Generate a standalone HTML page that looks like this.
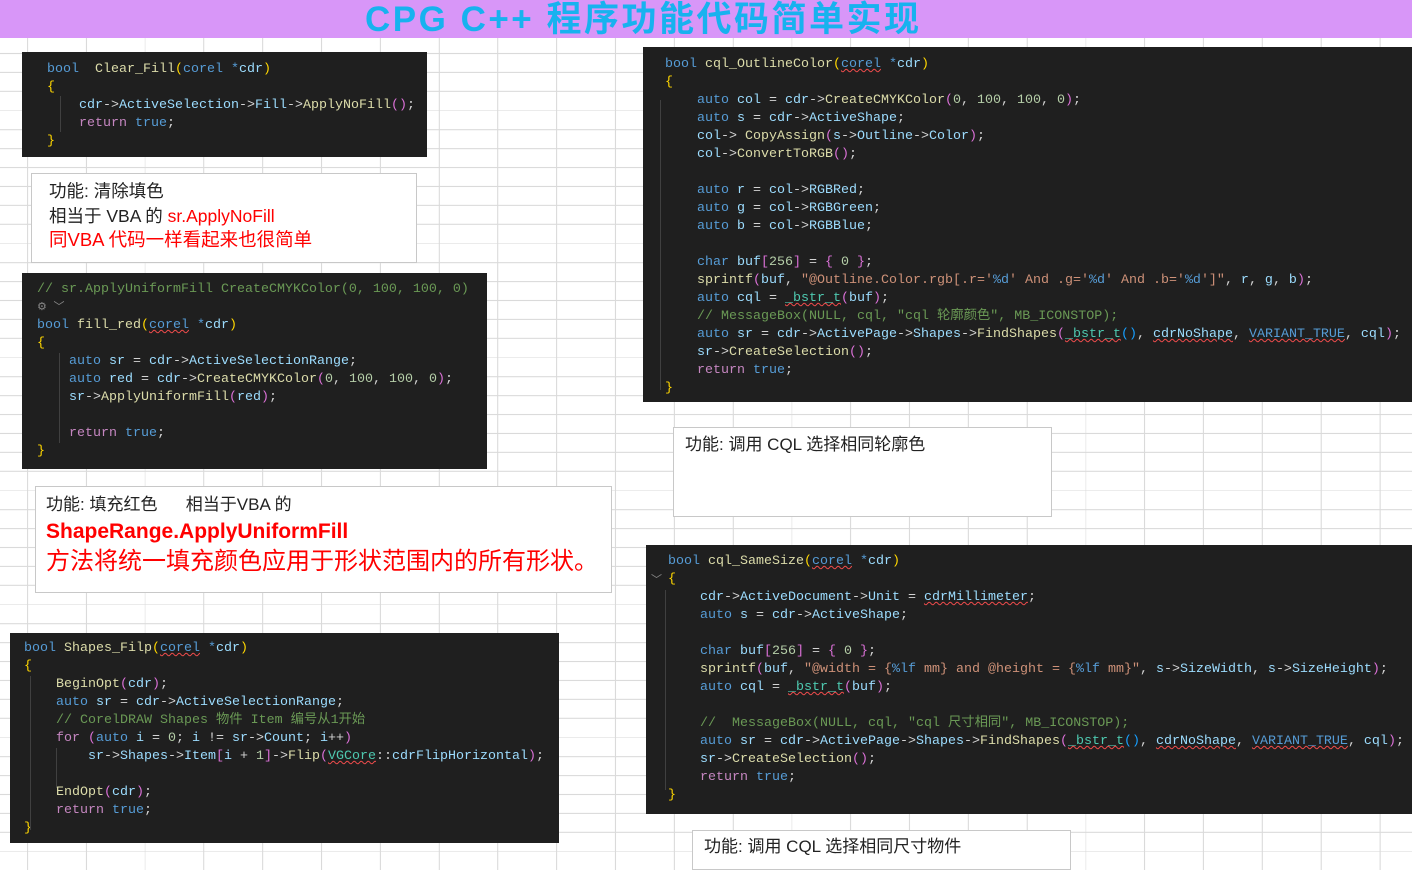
<!DOCTYPE html>
<html><head><meta charset="utf-8"><style>
html,body{margin:0;padding:0}
body{width:1412px;height:868px;position:relative;overflow:hidden;background:#fff;
background-image:repeating-linear-gradient(to right,transparent 0,transparent 27px,#dadada 27px,#dadada 28px,transparent 28px,transparent 58.8px),
repeating-linear-gradient(to bottom,transparent 0,transparent 15px,#dadada 15px,#dadada 16px,transparent 16px,transparent 19px);
background-position:0 0,0 0;}
.banner{position:absolute;left:0;top:0;width:1412px;height:38px;background:#d896f8;}
.title{position:absolute;left:365px;top:1px;width:570px;white-space:nowrap;font-family:"Liberation Sans","Noto Sans CJK SC",sans-serif;font-weight:bold;font-size:35px;letter-spacing:2.5px;color:#17b2ef;line-height:38px}
.code{position:absolute;background:#1f1f1f;box-sizing:border-box;overflow:hidden}
.code pre{margin:0;font-family:"Liberation Mono","Noto Sans CJK SC",monospace;font-size:13.33px;line-height:18px;color:#9cdcfe;white-space:pre}
.k{color:#569cd6}.f{color:#dcdcaa}.c{color:#c586c0}.n{color:#b5cea8}.s{color:#ce9178}.m{color:#6a9955}.y{color:#ffd700}.p{color:#da70d6}.bl{color:#179fff}.t{color:#4ec9b0}.w{color:#d4d4d4}
.u{text-decoration:underline wavy #f14c4c;text-decoration-thickness:1px}
.box{position:absolute;background:#fff;border:1px solid #c8c8c8;box-sizing:border-box;font-family:"Liberation Sans","Noto Sans CJK SC",sans-serif;color:#222}
.guide{position:absolute;width:1px;background:#404040}
</style></head><body>
<div class="banner"></div>
<div class="title">CPG C++ 程序功能代码简单实现</div>

<div class="code" style="left:22px;top:52px;width:405px;height:105px;padding:9px 0 0 25px">
<div class="guide" style="left:38px;top:44px;height:36px"></div>
<pre><span class="k">bool</span>  <span class="f">Clear_Fill</span><span class="y">(</span><span class="k">corel</span> <span class="k">*</span>cdr<span class="y">)</span>
<span class="y">{</span>
    cdr<span class="w">-&gt;</span>ActiveSelection<span class="w">-&gt;</span>Fill<span class="w">-&gt;</span><span class="f">ApplyNoFill</span><span class="p">()</span><span class="w">;</span>
    <span class="c">return</span> <span class="k">true</span><span class="w">;</span>
<span class="y">}</span></pre></div>

<div class="box" style="left:31px;top:173px;width:386px;height:90px;padding:5px 0 0 17px;font-size:17.5px;line-height:24.5px">
<div>功能: 清除填色</div>
<div>相当于 VBA 的 <span style="color:#f00">sr.ApplyNoFill</span></div>
<div style="color:#f00;font-size:18.5px">同VBA 代码一样看起来也很简单</div>
</div>

<div class="code" style="left:22px;top:273px;width:465px;height:196px;padding:8px 0 0 15px">
<div class="guide" style="left:37px;top:80px;height:90px"></div>
<pre><span class="m">// sr.ApplyUniformFill CreateCMYKColor(0, 100, 100, 0)</span>
<span style="color:#888;font-size:11px">⚙ ﹀</span>
<span class="k">bool</span> <span class="f">fill_red</span><span class="y">(</span><span class="k u">corel</span> <span class="k">*</span>cdr<span class="y">)</span>
<span class="y">{</span>
    <span class="k">auto</span> sr <span class="w">=</span> cdr<span class="w">-&gt;</span>ActiveSelectionRange<span class="w">;</span>
    <span class="k">auto</span> red <span class="w">=</span> cdr<span class="w">-&gt;</span><span class="f">CreateCMYKColor</span><span class="p">(</span><span class="n">0</span><span class="w">,</span> <span class="n">100</span><span class="w">,</span> <span class="n">100</span><span class="w">,</span> <span class="n">0</span><span class="p">)</span><span class="w">;</span>
    sr<span class="w">-&gt;</span><span class="f">ApplyUniformFill</span><span class="p">(</span>red<span class="p">)</span><span class="w">;</span>

    <span class="c">return</span> <span class="k">true</span><span class="w">;</span>
<span class="y">}</span></pre></div>

<div class="box" style="left:35px;top:486px;width:577px;height:107px;padding:6px 0 0 10px">
<div style="font-size:17px;line-height:24px">功能: 填充红色&nbsp;&nbsp;&nbsp;&nbsp;&nbsp;&nbsp;相当于VBA 的</div>
<div style="font-size:21px;line-height:29px;color:#f00;font-weight:bold">ShapeRange.ApplyUniformFill</div>
<div style="font-size:24px;line-height:32px;color:#f00">方法将统一填充颜色应用于形状范围内的所有形状。</div>
</div>

<div class="code" style="left:10px;top:633px;width:549px;height:210px;padding:7px 0 0 14px">
<div class="guide" style="left:20px;top:43px;height:154px"></div>
<div class="guide" style="left:46px;top:115px;height:40px"></div>
<pre><span class="k">bool</span> <span class="f">Shapes_Filp</span><span class="y">(</span><span class="k u">corel</span> <span class="k">*</span>cdr<span class="y">)</span>
<span class="y">{</span>
    <span class="f">BeginOpt</span><span class="p">(</span>cdr<span class="p">)</span><span class="w">;</span>
    <span class="k">auto</span> sr <span class="w">=</span> cdr<span class="w">-&gt;</span>ActiveSelectionRange<span class="w">;</span>
    <span class="m">// CorelDRAW Shapes 物件 Item 编号从1开始</span>
    <span class="c">for</span> <span class="p">(</span><span class="k">auto</span> i <span class="w">=</span> <span class="n">0</span><span class="w">;</span> i <span class="w">!=</span> sr<span class="w">-&gt;</span>Count<span class="w">;</span> i<span class="w">++</span><span class="p">)</span>
        sr<span class="w">-&gt;</span>Shapes<span class="w">-&gt;</span>Item<span class="p">[</span>i <span class="w">+</span> <span class="n">1</span><span class="p">]</span><span class="w">-&gt;</span><span class="f">Flip</span><span class="p">(</span><span class="t u">VGCore</span><span class="w">::</span>cdrFlipHorizontal<span class="p">)</span><span class="w">;</span>

    <span class="f">EndOpt</span><span class="p">(</span>cdr<span class="p">)</span><span class="w">;</span>
    <span class="c">return</span> <span class="k">true</span><span class="w">;</span>
<span class="y">}</span></pre></div>

<div class="code" style="left:643px;top:47px;width:769px;height:355px;padding:9px 0 0 22px">
<div class="guide" style="left:17px;top:53px;height:290px"></div>
<pre><span class="k">bool</span> <span class="f">cql_OutlineColor</span><span class="y">(</span><span class="k u">corel</span> <span class="k">*</span>cdr<span class="y">)</span>
<span class="y">{</span>
    <span class="k">auto</span> col <span class="w">=</span> cdr<span class="w">-&gt;</span><span class="f">CreateCMYKColor</span><span class="p">(</span><span class="n">0</span><span class="w">,</span> <span class="n">100</span><span class="w">,</span> <span class="n">100</span><span class="w">,</span> <span class="n">0</span><span class="p">)</span><span class="w">;</span>
    <span class="k">auto</span> s <span class="w">=</span> cdr<span class="w">-&gt;</span>ActiveShape<span class="w">;</span>
    col<span class="w">-&gt;</span> <span class="f">CopyAssign</span><span class="p">(</span>s<span class="w">-&gt;</span>Outline<span class="w">-&gt;</span>Color<span class="p">)</span><span class="w">;</span>
    col<span class="w">-&gt;</span><span class="f">ConvertToRGB</span><span class="p">()</span><span class="w">;</span>

    <span class="k">auto</span> r <span class="w">=</span> col<span class="w">-&gt;</span>RGBRed<span class="w">;</span>
    <span class="k">auto</span> g <span class="w">=</span> col<span class="w">-&gt;</span>RGBGreen<span class="w">;</span>
    <span class="k">auto</span> b <span class="w">=</span> col<span class="w">-&gt;</span>RGBBlue<span class="w">;</span>

    <span class="k">char</span> buf<span class="p">[</span><span class="n">256</span><span class="p">]</span> <span class="w">=</span> <span class="p">{</span> <span class="n">0</span> <span class="p">}</span><span class="w">;</span>
    <span class="f">sprintf</span><span class="p">(</span>buf<span class="w">,</span> <span class="s">"@Outline.Color.rgb[.r='<span class="k">%d</span>' And .g='<span class="k">%d</span>' And .b='<span class="k">%d</span>']"</span><span class="w">,</span> r<span class="w">,</span> g<span class="w">,</span> b<span class="p">)</span><span class="w">;</span>
    <span class="k">auto</span> cql <span class="w">=</span> <span class="t u">_bstr_t</span><span class="p">(</span>buf<span class="p">)</span><span class="w">;</span>
    <span class="m">// MessageBox(NULL, cql, "cql 轮廓颜色", MB_ICONSTOP);</span>
    <span class="k">auto</span> sr <span class="w">=</span> cdr<span class="w">-&gt;</span>ActivePage<span class="w">-&gt;</span>Shapes<span class="w">-&gt;</span><span class="f">FindShapes</span><span class="p">(</span><span class="t u">_bstr_t</span><span class="bl">()</span><span class="w">,</span> <span class="u">cdrNoShape</span><span class="w">,</span> <span class="k u">VARIANT_TRUE</span><span class="w">,</span> cql<span class="p">)</span><span class="w">;</span>
    sr<span class="w">-&gt;</span><span class="f">CreateSelection</span><span class="p">()</span><span class="w">;</span>
    <span class="c">return</span> <span class="k">true</span><span class="w">;</span>
<span class="y">}</span></pre></div>

<div class="box" style="left:673px;top:427px;width:379px;height:90px;padding:6px 0 0 11px;font-size:17px;line-height:22px">功能: 调用 CQL 选择相同轮廓色</div>

<div class="code" style="left:646px;top:545px;width:766px;height:269px;padding:8px 0 0 22px">
<div style="position:absolute;left:5px;top:26px;color:#888;font:11px 'Liberation Sans',sans-serif">﹀</div>
<div class="guide" style="left:19px;top:45px;height:200px"></div>
<pre><span class="k">bool</span> <span class="f">cql_SameSize</span><span class="y">(</span><span class="k u">corel</span> <span class="k">*</span>cdr<span class="y">)</span>
<span class="y">{</span>
    cdr<span class="w">-&gt;</span>ActiveDocument<span class="w">-&gt;</span>Unit <span class="w">=</span> <span class="u">cdrMillimeter</span><span class="w">;</span>
    <span class="k">auto</span> s <span class="w">=</span> cdr<span class="w">-&gt;</span>ActiveShape<span class="w">;</span>

    <span class="k">char</span> buf<span class="p">[</span><span class="n">256</span><span class="p">]</span> <span class="w">=</span> <span class="p">{</span> <span class="n">0</span> <span class="p">}</span><span class="w">;</span>
    <span class="f">sprintf</span><span class="p">(</span>buf<span class="w">,</span> <span class="s">"@width = {<span class="k">%lf</span> mm} and @height = {<span class="k">%lf</span> mm}"</span><span class="w">,</span> s<span class="w">-&gt;</span>SizeWidth<span class="w">,</span> s<span class="w">-&gt;</span>SizeHeight<span class="p">)</span><span class="w">;</span>
    <span class="k">auto</span> cql <span class="w">=</span> <span class="t u">_bstr_t</span><span class="p">(</span>buf<span class="p">)</span><span class="w">;</span>

    <span class="m">//  MessageBox(NULL, cql, "cql 尺寸相同", MB_ICONSTOP);</span>
    <span class="k">auto</span> sr <span class="w">=</span> cdr<span class="w">-&gt;</span>ActivePage<span class="w">-&gt;</span>Shapes<span class="w">-&gt;</span><span class="f">FindShapes</span><span class="p">(</span><span class="t u">_bstr_t</span><span class="bl">()</span><span class="w">,</span> <span class="u">cdrNoShape</span><span class="w">,</span> <span class="k u">VARIANT_TRUE</span><span class="w">,</span> cql<span class="p">)</span><span class="w">;</span>
    sr<span class="w">-&gt;</span><span class="f">CreateSelection</span><span class="p">()</span><span class="w">;</span>
    <span class="c">return</span> <span class="k">true</span><span class="w">;</span>
<span class="y">}</span></pre></div>

<div class="box" style="left:692px;top:830px;width:379px;height:40px;padding:5px 0 0 11px;font-size:17px;line-height:22px">功能: 调用 CQL 选择相同尺寸物件</div>
</body></html>
